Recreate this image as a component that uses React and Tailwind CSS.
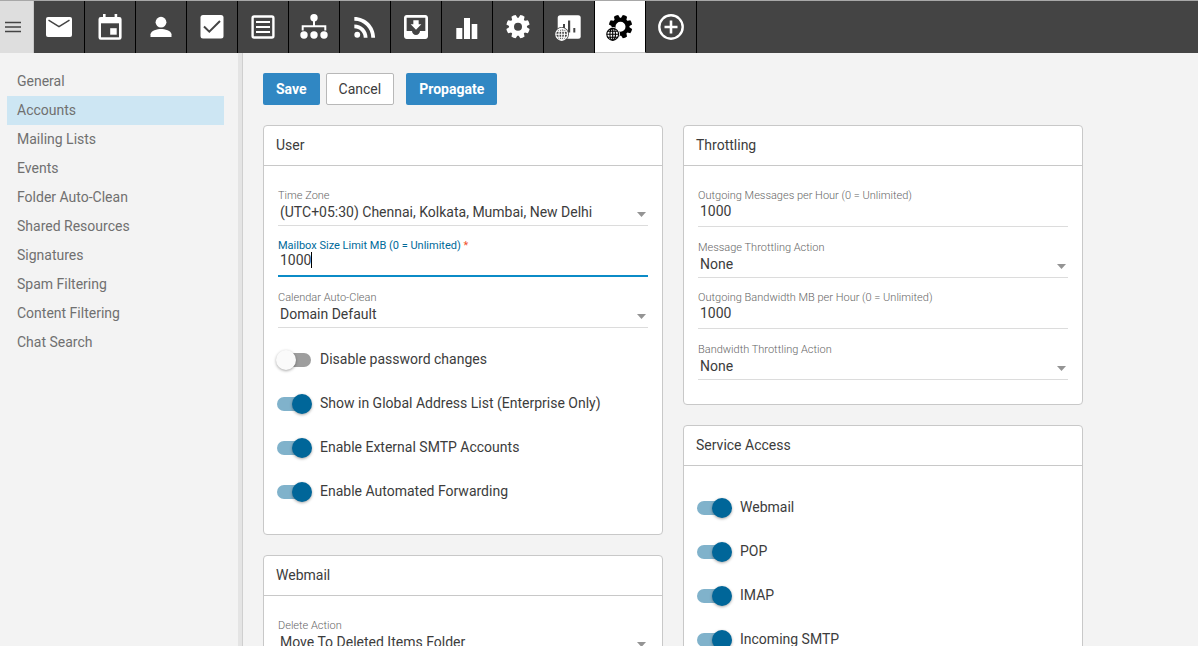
import { useState } from "react";
import { MdRssFeed, MdMoveToInbox } from "react-icons/md";

function Icon({ children }) {
  return (
    <svg viewBox="0 0 32 32" width="32" height="32" fill="currentColor" aria-hidden="true">
      {children}
    </svg>
  );
}

// eight teeth around a ring
function Gear({ cx, cy, hole }) {
  const angles = [22.5, 67.5, 112.5, 157.5, 202.5, 247.5, 292.5, 337.5];
  return (
    <g transform={`translate(${cx} ${cy})`}>
      {angles.map((a) => (
        <path key={a} d="M-3 -7.5 L-2.3 -11.6 Q0 -12.2 2.3 -11.6 L3 -7.5z" transform={`rotate(${a})`} />
      ))}
      <circle r={(9 + hole) / 2} fill="none" stroke="currentColor" strokeWidth={9 - hole} />
    </g>
  );
}

function Globe({ cx, cy, back }) {
  return (
    <g transform={`translate(${cx} ${cy})`} fill="none" stroke="currentColor" strokeWidth="1.1">
      <circle r="7.2" fill={back} stroke="none" />
      <circle r="5.9" />
      <ellipse rx="2.8" ry="5.9" />
      <path d="M0 -5.9V5.9M-5.9 0H5.9M-5 -3H5M-5 3H5" />
    </g>
  );
}

const navItems = [
  {
    name: "Email",
    icon: (
      <Icon>
        <rect x="3" y="6" width="26" height="20" rx="2" />
        <path d="M5.5 9.2L16 15.7L26.5 9.2" fill="none" stroke="#444" strokeWidth="1.5" />
      </Icon>
    ),
  },
  {
    name: "Calendar",
    icon: (
      <Icon>
        <path d="M9 3h2.6v3h9V3h2.6v3h2.1a2.3 2.3 0 0 1 2.3 2.3v18.1a2.4 2.4 0 0 1-2.3 2.4H6.8a2.4 2.4 0 0 1-2.3-2.4V8.3a2.3 2.3 0 0 1 2.3-2.3H9z" />
        <path d="M7 12.3h18v14H7z" fill="#444" />
        <path d="M16.2 17.2h6.5v6.5h-6.5z" />
      </Icon>
    ),
  },
  {
    name: "Contacts",
    icon: (
      <Icon>
        <circle cx="16" cy="11.2" r="5.4" />
        <path d="M5.5 26v-2.7c0-3.6 7-5.4 10.5-5.4s10.5 1.8 10.5 5.4V26z" />
      </Icon>
    ),
  },
  {
    name: "Tasks",
    icon: (
      <Icon>
        <rect x="4.5" y="4" width="23" height="23.5" rx="2.5" />
        <path d="M8 15.5L13.3 20.7L24 10" fill="none" stroke="#444" strokeWidth="2" />
      </Icon>
    ),
  },
  {
    name: "Notes",
    icon: (
      <Icon>
        <rect x="5.6" y="5.5" width="20.8" height="21" rx="1.5" fill="none" stroke="currentColor" strokeWidth="2.4" />
        <path d="M9 11h14M9 16h14M9 21h14" stroke="currentColor" strokeWidth="2.2" />
      </Icon>
    ),
  },
  {
    name: "Domains",
    icon: (
      <Icon>
        <circle cx="16" cy="6.7" r="3.7" />
        <path d="M16 7v8M4.700 19.5v-4.200h22.600v4.200" fill="none" stroke="currentColor" strokeWidth="2" />
        <circle cx="6" cy="24" r="3.7" />
        <circle cx="16" cy="24" r="3.7" />
        <circle cx="26" cy="24" r="3.7" />
      </Icon>
    ),
  },
  { name: "RSS Feeds", icon: <MdRssFeed size={32} /> },
  { name: "Downloads", icon: <MdMoveToInbox size={32} /> },
  {
    name: "Reports",
    icon: (
      <Icon>
        <path d="M5.3 17h6v11h-6zM13 7h6v21h-6zM20.7 13h5.6v15h-5.6z" />
      </Icon>
    ),
  },
  {
    name: "Settings",
    icon: (
      <Icon>
        <Gear cx="16" cy="15.7" hole={4} />
      </Icon>
    ),
  },
  {
    name: "Domain Reports",
    icon: (
      <Icon>
        <rect x="4.700" y="4.3" width="23" height="23.5" rx="2.5" />
        <path d="M10 13h2v8h-2zM15 9.5h2.200v12h-2.200zM20.300 17h2v4.500h-2z" fill="#444" />
        <Globe cx="8.7" cy="23.3" back="#444" />
      </Icon>
    ),
  },
  {
    name: "Domain Settings",
    active: true,
    icon: (
      <Icon>
        <Gear cx="16.5" cy="15.7" hole={5} />
        <Globe cx="8.7" cy="23.3" back="#fff" />
      </Icon>
    ),
  },
  {
    name: "New",
    icon: (
      <Icon>
        <circle cx="16" cy="16" r="11.7" fill="none" stroke="currentColor" strokeWidth="2.4" />
        <path d="M16 9.5v13M9.5 16h13" stroke="currentColor" strokeWidth="2.6" />
      </Icon>
    ),
  },
];

const menu = [
  "General",
  "Accounts",
  "Mailing Lists",
  "Events",
  "Folder Auto-Clean",
  "Shared Resources",
  "Signatures",
  "Spam Filtering",
  "Content Filtering",
  "Chat Search",
];

function Card({ title, children }) {
  return (
    <section className="rounded border border-[#c8c8c8] bg-white">
      <h2 className="flex h-10 items-center border-b border-[#c8c8c8] px-3 pb-0.5">{title}</h2>
      <div className="px-3.5 pt-[22px] pb-3">{children}</div>
    </section>
  );
}

function SelectField({ id, label, options }) {
  return (
    <div className="mb-3">
      <label htmlFor={id} className="block h-3.5 text-[11px] leading-4 font-light text-[#666]">
        {label}
      </label>
      <div className="relative">
        <select
          id={id}
          className="block h-6 w-full appearance-none border-b border-[#dcdcdc] bg-transparent pr-6 pb-1 pl-0.5 outline-none"
        >
          {options.map((o) => (
            <option key={o}>{o}</option>
          ))}
        </select>
        <svg className="pointer-events-none absolute top-2.5 right-0.5" width="9" height="5" aria-hidden="true">
          <path d="M0 0h9L4.5 5z" fill="#949494" />
        </svg>
      </div>
    </div>
  );
}

function InputField({ id, label, value, focused, required }) {
  const [text, setText] = useState(value);
  return (
    <div className="mb-[13px]">
      <label
        htmlFor={id}
        className={`block h-3.5 text-[11px] leading-4 ${focused ? "text-[#006a9a]" : "font-light text-[#666]"}`}
      >
        {label}
        {required && <span className="text-[#f0522d]"> *</span>}
      </label>
      <div className="relative">
        <input
          id={id}
          type="text"
          value={text}
          required={required}
          onChange={(e) => setText(e.target.value)}
          className={`block h-[25px] w-full bg-transparent pl-0.5 outline-none ${
            focused ? "border-b-2 border-[#0b8bc7] pb-[7px]" : "border-b border-[#dcdcdc] pb-1.5"
          }`}
        />
        {focused && <span className="absolute top-0 left-[33px] h-4 w-px bg-black" />}
      </div>
    </div>
  );
}

function Toggles({ items }) {
  return (
    <div className="-mx-0.5 flex flex-col gap-1 pb-2.5">
      {items.map((item) => (
        <label key={item.label} className="flex h-10 items-center gap-2">
          <input
            type="checkbox"
            role="switch"
            defaultChecked={item.on}
            className="relative h-5 w-9 shrink-0 appearance-none before:absolute before:top-[3px] before:left-px before:h-3.5 before:w-[34px] before:rounded-full before:bg-[#9e9e9e] after:absolute after:top-0 after:left-0 after:size-5 after:rounded-full after:bg-[#fafafa] after:shadow-[0_1px_3px_rgba(0,0,0,0.35)] checked:before:bg-[#80b2cb] checked:after:left-4 checked:after:bg-[#006699]"
          />
          <span className="pb-0.5">{item.label}</span>
        </label>
      ))}
    </div>
  );
}

function App() {
  const [current, setCurrent] = useState("Accounts");

  return (
    <div className="flex h-screen flex-col overflow-hidden bg-[#f3f3f3] font-[Roboto,sans-serif] text-sm text-[#3c3c3c]">
      <header className="flex h-[53px] shrink-0 border-t border-[#a8a8a8] bg-[#444] text-white">
        <button type="button" aria-label="Menu" className="w-[34px] border-r border-[#c8c8c8] bg-[#dedede] pl-[5px]">
          <svg width="16" height="12" aria-hidden="true">
            <path d="M0 1.5h16M0 6h16M0 10.5h16" stroke="#444" strokeWidth="1.4" />
          </svg>
        </button>
        <nav className="flex">
          {navItems.map((item) => (
            <button
              key={item.name}
              type="button"
              aria-label={item.name}
              className={`flex w-[51px] items-center justify-center border-r border-r-black ${
                item.active ? "border-b border-b-[#c8c8c8] bg-white text-black" : ""
              }`}
            >
              {item.icon}
            </button>
          ))}
        </nav>
      </header>

      <div className="flex min-h-0 flex-1">
        <aside className="w-[243px] shrink-0 border-r border-[#cfcfcf]">
          <div className="h-full border-r-4 border-[#e4e4e4] pt-3.5 pr-3.5 pl-[7px]">
            <ul>
              {menu.map((m) => (
                <li key={m}>
                  <a
                    href="#"
                    onClick={() => setCurrent(m)}
                    className={`flex h-[29px] items-center px-2.5 pb-0.5 text-[#707070] ${current === m ? "bg-[#cde6f3]" : ""}`}
                  >
                    {m}
                  </a>
                </li>
              ))}
            </ul>
          </div>
        </aside>

        <main className="min-w-0 flex-1 overflow-hidden p-5">
          <div className="mb-5 flex h-8">
            <button type="button" className="rounded-xs bg-[#3087c3] px-[13px] font-bold text-white">
              Save
            </button>
            <button type="button" className="ml-1.5 rounded-xs border border-[#b8b8b8] bg-white px-3">
              Cancel
            </button>
            <button type="button" className="ml-3 rounded-xs bg-[#3087c3] px-[13px] font-bold text-white">
              Propagate
            </button>
          </div>

          <div className="grid max-w-[820px] grid-cols-2 items-start gap-5">
            <div className="flex flex-col gap-5">
              <Card title="User">
                <SelectField
                  id="timezone"
                  label="Time Zone"
                  options={["(UTC+05:30) Chennai, Kolkata, Mumbai, New Delhi"]}
                />
                <InputField id="mailbox" label="Mailbox Size Limit MB (0 = Unlimited)" value="1000" focused required />
                <SelectField id="autoclean" label="Calendar Auto-Clean" options={["Domain Default"]} />
                <Toggles
                  items={[
                    { label: "Disable password changes", on: false },
                    { label: "Show in Global Address List (Enterprise Only)", on: true },
                    { label: "Enable External SMTP Accounts", on: true },
                    { label: "Enable Automated Forwarding", on: true },
                  ]}
                />
              </Card>
              <Card title="Webmail">
                <SelectField id="delete" label="Delete Action" options={["Move To Deleted Items Folder"]} />
              </Card>
            </div>

            <div className="flex flex-col gap-5">
              <Card title="Throttling">
                <InputField id="messages" label="Outgoing Messages per Hour (0 = Unlimited)" value="1000" />
                <SelectField id="messageAction" label="Message Throttling Action" options={["None"]} />
                <InputField id="bandwidth" label="Outgoing Bandwidth MB per Hour (0 = Unlimited)" value="1000" />
                <SelectField id="bandwidthAction" label="Bandwidth Throttling Action" options={["None"]} />
              </Card>
              <Card title="Service Access">
                <Toggles
                  items={[
                    { label: "Webmail", on: true },
                    { label: "POP", on: true },
                    { label: "IMAP", on: true },
                    { label: "Incoming SMTP", on: true },
                  ]}
                />
              </Card>
            </div>
          </div>
        </main>
      </div>
    </div>
  );
}

export default App;
